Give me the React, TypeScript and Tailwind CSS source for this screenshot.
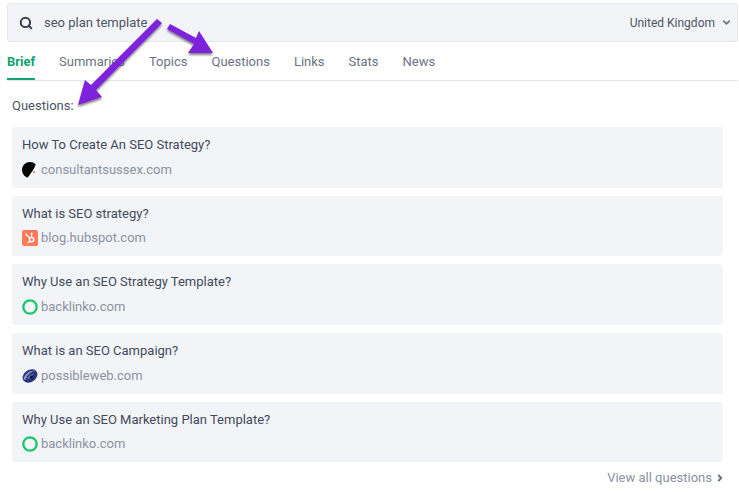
import { Search, ChevronDown, ChevronRight } from "lucide-react";

const tabs = ["Summaries", "Topics", "Questions", "Links", "Stats", "News"];

function ConsultantIcon() {
  return (
    <svg width="16" height="16" viewBox="0 0 16 16" className="shrink-0">
      <circle cx="8" cy="8" r="8" fill="#000" />
      <path d="M14 1.5C12.5 7 9 11 5 16.5L17 17L17 3Z" fill="#f6f6f8" />
      <rect x="11.5" y="9.5" width="1.4" height="1.4" fill="#d33" />
    </svg>
  );
}

function HubspotIcon() {
  return (
    <svg width="16" height="16" viewBox="0 0 16 16" className="shrink-0">
      <rect width="16" height="16" rx="2" fill="#ff7a59" />
      <circle cx="9.6" cy="9.6" r="2.2" fill="none" stroke="#fff" strokeWidth="1.4" />
      <path d="M9.6 7V4M8 8L4.5 5M8 11.2L5.5 13" stroke="#fff" strokeWidth="1.1" />
      <circle cx="4.2" cy="4.6" r="1" fill="#fff" />
      <circle cx="9.6" cy="3.6" r="1" fill="#fff" />
    </svg>
  );
}

function BacklinkoIcon() {
  return (
    <svg width="16" height="16" viewBox="0 0 16 16" className="shrink-0">
      <circle cx="8" cy="8" r="6.7" fill="none" stroke="#17c76c" strokeWidth="2.3" />
    </svg>
  );
}

function PossibleIcon() {
  return (
    <svg width="16" height="16" viewBox="0 0 16 16" className="shrink-0">
      <ellipse cx="8" cy="8" rx="8" ry="6" transform="rotate(-35 8 8)" fill="#24357a" />
      <path d="M1.5 11C3 5 9 1.5 13.5 3C9 3.5 5 6.5 3.5 12Z" fill="#8c9ace" />
      <path d="M5 11C6 7 10 5 12.5 6.5C10 7 8 8.5 7 11.5Z" fill="#5b6cab" />
      <circle cx="9.5" cy="9" r="1.6" fill="#0f1a45" />
    </svg>
  );
}

const questions = [
  { q: "How To Create An SEO Strategy?", site: "consultantsussex.com", icon: <ConsultantIcon />, h: "h-[61px]", mt: "mt-[7px]" },
  { q: "What is SEO strategy?", site: "blog.hubspot.com", icon: <HubspotIcon />, h: "h-[60px]", mt: "mt-[6px]" },
  { q: "Why Use an SEO Strategy Template?", site: "backlinko.com", icon: <BacklinkoIcon />, h: "h-[61px]", mt: "mt-[7px]" },
  { q: "What is an SEO Campaign?", site: "possibleweb.com", icon: <PossibleIcon />, h: "h-[61px]", mt: "mt-[7px]" },
  { q: "Why Use an SEO Marketing Plan Template?", site: "backlinko.com", icon: <BacklinkoIcon />, h: "h-[60px]", mt: "mt-[6px]" },
];

export default function App() {
  return (
    <div className="relative h-[494px] w-[739px] overflow-hidden bg-white font-['Roboto',sans-serif]">
      <div className="pl-[7px] pr-px pt-[3px]">
        <div className="flex h-[39px] items-center rounded-[3px] border border-[#e5e7eb] bg-[#f3f4f8] pl-[11px] pr-[5px]">
          <Search size={14} strokeWidth={3.5} className="text-[#374151]" />
          <span className="ml-[11px] text-[13px] text-[#4b5563]">seo plan template</span>
          <span className="ml-auto text-[12px] text-[#4b5563]">United Kingdom</span>
          <ChevronDown size={11} strokeWidth={3.5} className="ml-[6px] text-[#6b7280]" />
        </div>
      </div>
      <div className="ml-[7px] mr-px flex h-[39px] items-center gap-[24px] border-b border-[#e5e7eb]">
        <div className="flex h-full w-[28px] items-center whitespace-nowrap border-b-[2px] border-[#10a36f] pt-[3px] text-[13px] font-bold text-[#10a36f]">
          Brief
        </div>
        {tabs.map((t) => (
          <span key={t} className="pt-[2px] text-[13px] text-[#6b7280]">
            {t}
          </span>
        ))}
      </div>
      <div className="px-[12px] pr-[16px]">
        <p className="mt-[16px] text-[13px] leading-[18px] text-[#4b5563]">Questions:</p>
        <div className="mt-[12px] flex flex-col gap-[8px]">
          {questions.map((item) => (
            <div key={item.q} className={`${item.h} rounded-[3px] bg-[#f3f4f8] px-[10px] pt-[9px]`}>
              <p className="text-[13px] leading-[18px] text-[#414a5a]">{item.q}</p>
              <div className={`${item.mt} flex items-center gap-[3px]`}>
                {item.icon}
                <span className="text-[13px] leading-[18px] text-[#8b92a0]">{item.site}</span>
              </div>
            </div>
          ))}
        </div>
        <div className="-mr-[2px] mt-[6px] flex items-center justify-end gap-[3px] text-[13px] text-[#8b92a0]">
          View all questions
          <ChevronRight size={10} strokeWidth={4.5} className="text-[#6b7280]" />
        </div>
      </div>
      {/* purple annotation arrows */}
      <svg width="739" height="494" className="pointer-events-none absolute left-0 top-0">
        <defs>
          <filter id="sh" x="-20%" y="-20%" width="140%" height="140%">
            <feDropShadow dx="0" dy="2" stdDeviation="1.2" floodColor="#000" floodOpacity="0.5" />
          </filter>
        </defs>
        <g fill="#7e22dc" filter="url(#sh)">
          <polygon points="157,19 162,23 96,90 102,97 78,105 85,80 91,85" />
          <polygon points="170,24 167,29 194,44 188,53 213,53 199,31 196,38" />
        </g>
      </svg>
    </div>
  );
}
